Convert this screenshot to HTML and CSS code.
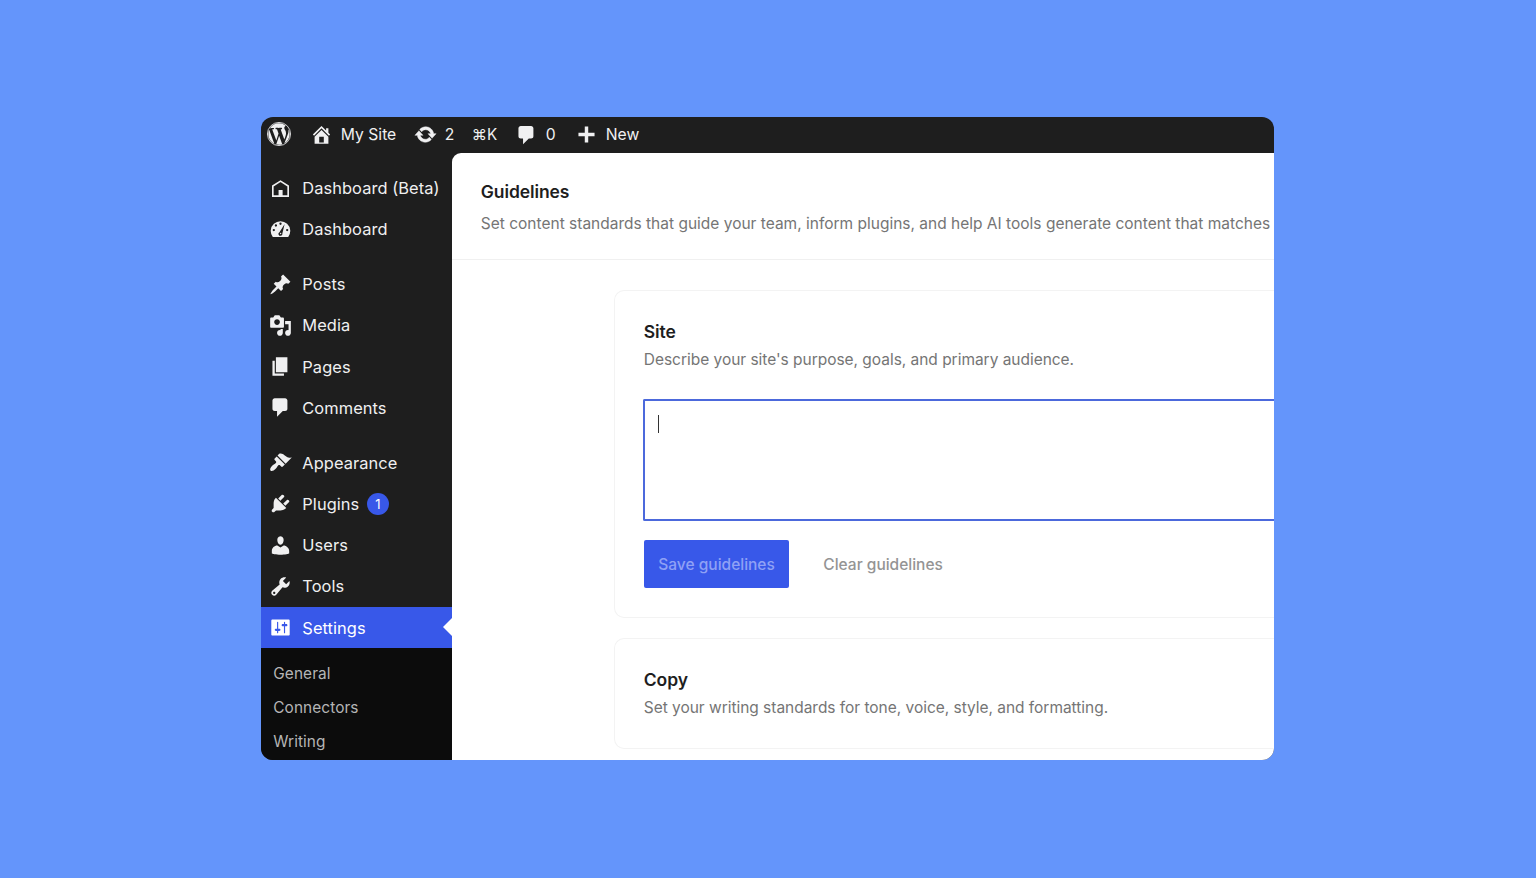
FILE: index.html
```html
<!DOCTYPE html>
<html lang="en">
<head>
    <meta charset="UTF-8">
    <title>Guidelines</title>
    <link rel="stylesheet" href="styles.css">
</head>
<body>
    <div class="window">
        <!-- Admin bar -->
        <header class="topbar">
            <svg class="logo" viewBox="0 0 20 20"><circle cx="10" cy="10" r="9.65" fill="none" stroke="currentColor" stroke-width=".7"/><path d="M7.78 15.37L4.37 6.22c.55-.02 1.17-.08 1.17-.08.5-.06.44-1.13-.06-1.11 0 0-1.45.11-2.37.11-.18 0-.37 0-.58-.01C4.12 2.69 6.87 1.11 10 1.11c2.33 0 4.45.87 6.05 2.34-.68-.11-1.65.39-1.65 1.58 0 .74.45 1.36.9 2.1.35.61.55 1.36.55 2.46 0 1.49-1.4 5-1.4 5l-3.03-8.37c.54-.02.82-.17.82-.17.5-.05.44-1.25-.06-1.22 0 0-1.44.12-2.38.12-.87 0-2.33-.12-2.33-.12-.5-.03-.56 1.2-.06 1.22l.92.08 1.26 3.41zM17.41 10c.24-.64.74-1.87.43-4.25.7 1.29 1.05 2.71 1.05 4.25 0 3.29-1.73 6.24-4.4 7.78.97-2.59 1.94-5.2 2.92-7.78zM6.1 18.09C3.12 16.65 1.11 13.53 1.11 10c0-1.3.23-2.48.72-3.59C3.25 10.3 4.67 14.2 6.1 18.09zm4.03-6.63l2.58 6.98c-.86.29-1.76.45-2.71.45-.79 0-1.57-.11-2.29-.33.81-2.38 1.62-4.74 2.42-7.1z"/></svg>
            <a class="bar-item site"><svg class="icon" viewBox="0 0 20 20"><path d="M16 8.5l1.53 1.53-1.06 1.06L10 4.6l-6.47 6.49-1.06-1.06L10 2.5l4 4v-2h2v4zm-6-2.46l6 5.99V18H4v-5.97zM12 17v-5H8v5h4z"/></svg>My Site</a>
            <a class="bar-item updates"><svg class="icon" viewBox="0 0 20 20"><path stroke="currentColor" stroke-width=".4" d="M10.2 3.28c3.53 0 6.43 2.61 6.92 6h2.08l-3.5 4-3.5-4h2.32c-.45-1.97-2.21-3.45-4.32-3.45-1.45 0-2.73.71-3.54 1.78L4.95 5.66C6.23 4.2 8.11 3.28 10.2 3.28zm-.4 13.44c-3.52 0-6.43-2.61-6.92-6H.8l3.5-4c1.17 1.33 2.33 2.67 3.5 4H5.48c.45 1.97 2.21 3.45 4.32 3.45 1.45 0 2.73-.71 3.54-1.78l1.71 1.95c-1.28 1.46-3.15 2.38-5.25 2.38z"/></svg>2</a>
            <a class="bar-item shortcut">⌘K</a>
            <a class="bar-item replies"><svg class="icon" viewBox="0 0 20 20"><path d="M5 2.500h9c1.100 0 2 .9 2 2v7c0 1.100-.9 2-2 2h-2l-5 5v-5H5c-1.100 0-2-.9-2-2v-7c0-1.100.9-2 2-2z"/></svg>0</a>
            <a class="bar-item new"><svg class="icon" viewBox="0 0 20 20"><path d="M17 8.500v3h-5.500V17h-3v-5.500H3v-3h5.500V3h3v5.500z"/></svg>New</a>
        </header>

        <div class="body">
            <!-- Sidebar menu -->
            <nav class="sidebar">
                <a class="menu-item"><svg class="icon" viewBox="0 0 24 24"><path fill="none" stroke="currentColor" stroke-width="1.7" d="M4 9.4 12 4.3l8 5.1V20H4z"/><path d="M10 13.6h4.2V20H10z"/></svg>Dashboard (Beta)</a>
                <a class="menu-item"><svg class="icon" viewBox="0 0 20 20"><path fill-rule="evenodd" d="M3.300 16.500h13.400A8.500 8.500 0 1 0 3.300 16.500zM10 4a1 1 0 1 1 0 2 1 1 0 0 1 0-2zM6 5.500a1 1 0 1 1 0 2 1 1 0 0 1 0-2zM4.200 9.500a1 1 0 1 1 0 2 1 1 0 0 1 0-2zM15.800 9.500a1 1 0 1 1 0 2 1 1 0 0 1 0-2zM13.600 5.200 11.600 13.400a1.700 1.700 0 1 1-2.500-1.100z"/><circle cx="10.100" cy="13.500" r=".6"/></svg>Dashboard</a>
                <div class="separator"></div>
                <a class="menu-item"><svg class="icon" viewBox="0 0 20 20"><path d="M10.440 3.020l1.820-1.820 6.360 6.350-1.830 1.820c-1.050-.68-2.480-.57-3.410.36l-.75.75c-.92.93-1.040 2.350-.35 3.410l-1.830 1.820-2.410-2.410-2.800 2.790c-.42.42-3.380 2.710-3.800 2.290s1.860-3.390 2.280-3.810l2.790-2.790L4.100 9.360l1.830-1.820c1.050.69 2.480.57 3.400-.36l.75-.75c.93-.92 1.050-2.350.36-3.410z"/></svg>Posts</a>
                <a class="menu-item"><svg class="icon" viewBox="0 0 20 20"><path d="M13 11V4c0-.55-.45-1-1-1h-1.670L9 1H5L3.670 3H2c-.55 0-1 .45-1 1v7c0 .55.45 1 1 1h10c.55 0 1-.45 1-1zM7 4.500c1.380 0 2.500 1.120 2.500 2.500S8.380 9.500 7 9.500 4.500 8.380 4.500 7 5.620 4.500 7 4.500zM14 6h5v10.500c0 1.380-1.120 2.500-2.500 2.500S14 17.880 14 16.500s1.120-2.500 2.500-2.500c.17 0 .34.02.5.05V9h-3V6zm-4 8.050V13h2v3.500c0 1.380-1.120 2.500-2.500 2.500S7 17.880 7 16.500 8.120 14 9.500 14c.17 0 .34.02.5.05z"/></svg>Media</a>
                <a class="menu-item"><svg class="icon" viewBox="0 0 20 20"><path d="M6 15V2h10v13H6zm-1 1h8v2H3V5h2v11z"/></svg>Pages</a>
                <a class="menu-item"><svg class="icon" viewBox="0 0 20 20"><path d="M5 2h9c1.1 0 2 .9 2 2v7c0 1.1-.9 2-2 2h-2l-5 5v-5H5c-1.1 0-2-.9-2-2V4c0-1.1.9-2 2-2z"/></svg>Comments</a>
                <div class="separator"></div>
                <a class="menu-item"><svg class="icon" viewBox="0 0 20 20"><path d="M14.480 11.060L7.410 3.990l1.500-1.500c.5-.56 2.300-.47 3.510.32 1.210.8 1.430 1.280 2.910 2.100 1.180.64 2.450 1.260 4.450.85zm-.71.71L6.700 4.700 4.930 6.470c-.39.39-.39 1.020 0 1.410l1.060 1.060c.39.39.39 1.030 0 1.420-.6.6-1.430 1.110-2.210 1.690-.35.26-.7.53-1.010.84C1.430 14.230.4 16.080 1.400 17.070c.99 1 2.840-.03 4.180-1.360.31-.31.58-.66.85-1.020.57-.78 1.080-1.610 1.690-2.210.39-.39 1.020-.39 1.410 0l1.060 1.060c.39.39 1.020.39 1.410 0z"/></svg>Appearance</a>
                <a class="menu-item"><svg class="icon" viewBox="0 0 20 20"><path d="M13.110 4.360L9.870 7.600 8 5.730l3.240-3.240c.35-.34 1.050-.2 1.560.32.52.51.66 1.210.31 1.550zm-8 1.770l.91-1.120 9.010 9.010-1.190.84c-.71.71-2.630 1.160-3.820 1.160H6.140L4.900 17.260c-.59.59-1.540.59-2.120 0-.59-.58-.59-1.530 0-2.120l1.240-1.240v-3.880c0-1.130.4-3.190 1.090-3.890zm7.260 3.970l3.240-3.240c.34-.35 1.040-.21 1.550.31.52.51.66 1.210.31 1.550l-3.240 3.250z"/></svg>Plugins<span class="badge">1</span></a>
                <a class="menu-item"><svg class="icon" viewBox="0 0 20 20"><path d="M10 9.250c-2.270 0-2.730-3.440-2.730-3.440C7 4.020 7.820 2 9.970 2c2.160 0 2.980 2.020 2.710 3.810 0 0-.41 3.440-2.680 3.440zm0 2.570L12.720 10c2.390 0 4.820 2.330 4.820 4.530v2.490s-3.950 1.130-7.540 1.130c-3.650 0-7.540-1.130-7.540-1.130v-2.490c0-2.250 2.240-4.480 4.770-4.480z"/></svg>Users</a>
                <a class="menu-item"><svg class="icon" viewBox="0 0 20 20"><path d="M16.680 9.770c-1.340 1.340-3.300 1.670-4.950.99l-5.410 6.520c-.99.99-2.590.99-3.580 0s-.99-2.590 0-3.570l6.520-5.420c-.68-1.650-.35-3.610.99-4.950 1.280-1.280 3.120-1.620 4.720-1.060l-2.890 2.890 2.820 2.820 2.860-2.870c.53 1.580.18 3.390-1.080 4.650zM3.810 16.210c.4.39 1.040.39 1.430 0 .4-.4.4-1.040 0-1.430-.39-.4-1.030-.4-1.430 0-.39.39-.39 1.030 0 1.430z"/></svg>Tools</a>
                <a class="menu-item current"><svg class="icon" viewBox="0 0 20 20"><path d="M18 16V4c0-.55-.45-1-1-1H3c-.55 0-1 .45-1 1v12c0 .55.45 1 1 1h14c.55 0 1-.45 1-1zM8 11h1c.55 0 1 .45 1 1s-.45 1-1 1H8v1.500c0 .28-.22.5-.5.5s-.5-.22-.5-.5V13H6c-.55 0-1-.45-1-1s.45-1 1-1h1V5.500c0-.28.22-.5.5-.5s.5.22.5.5V11zm5-2h-1c-.55 0-1-.45-1-1s.45-1 1-1h1V5.500c0-.28.22-.5.5-.5s.5.22.5.5V7h1c.55 0 1 .45 1 1s-.45 1-1 1h-1v5.500c0 .28-.22.5-.5.5s-.5-.22-.5-.5V9z"/></svg>Settings</a>
                <div class="submenu">
                    <a>General</a>
                    <a>Connectors</a>
                    <a>Writing</a>
                </div>
            </nav>

            <!-- Page -->
            <main class="content">
                <div class="page-header">
                    <h1>Guidelines</h1>
                    <p>Set content standards that guide your team, inform plugins, and help AI tools generate content that matches</p>
                </div>
                <div class="cards">
                    <section class="card site-card">
                        <h2>Site</h2>
                        <p>Describe your site's purpose, goals, and primary audience.</p>
                        <div class="field"><span class="caret"></span></div>
                        <div class="actions">
                            <button class="button primary">Save guidelines</button>
                            <button class="button">Clear guidelines</button>
                        </div>
                    </section>
                    <section class="card copy-card">
                        <h2>Copy</h2>
                        <p>Set your writing standards for tone, voice, style, and formatting.</p>
                    </section>
                </div>
            </main>
        </div>
    </div>
</body>
</html>
```
FILE: styles.css
```css
* {
    box-sizing: border-box;
}
body {
    margin: 0;
    height: 100vh;
    padding: 0 1px 1px 0;
    display: flex;
    align-items: center;
    justify-content: center;
    overflow: hidden;
    background: #6495fb;
    font-family: Inter, "Liberation Sans", sans-serif;
    font-size: 16px;
}
h1, h2, p {
    margin: 0;
}
svg {
    fill: currentColor;
    flex: none;
}
.window {
    width: 1013.4px;
    height: 643.4px;
    display: flex;
    flex-direction: column;
    overflow: hidden;
    border-radius: 12px;
    background: #1e1e1e;
    color: #f0f0f1;
}

/* admin bar */
.topbar {
    flex: none;
    height: 36px;
    display: flex;
    align-items: center;
    padding-left: 6px;
    padding-bottom: 1px;
    font-size: 15.7px;
}
.logo {
    width: 24px;
    height: 24px;
}
.icon {
    width: 23px;
    height: 23px;
}
.bar-item {
    display: flex;
    align-items: center;
    white-space: nowrap;
}
.site {
    width: 104px;
    margin-left: 19px;
    gap: 8px;
}
.updates {
    width: 58px;
    gap: 8px;
}
.shortcut {
    width: 43px;
    font-size: 15.2px;
}
.replies {
    width: 60px;
    gap: 8px;
}
.new {
    gap: 8px;
}

/* menu */
.body {
    flex: 1;
    min-height: 0;
    display: flex;
}
.sidebar {
    flex: none;
    width: 191px;
    padding-top: 14.7px;
    display: flex;
    flex-direction: column;
    font-size: 16.4px;
    letter-spacing: .08px;
}
.menu-item {
    flex: none;
    height: 41.3px;
    display: flex;
    align-items: center;
    gap: 10.5px;
    padding-left: 8px;
    white-space: nowrap;
}
.separator {
    flex: none;
    height: 13.3px;
}
.badge {
    width: 22px;
    height: 22px;
    margin: 1px 0 0 -3px;
    display: flex;
    align-items: center;
    justify-content: center;
    border-radius: 50%;
    background: #3858e9;
    color: #fff;
    font-size: 13px;
}
.current {
    position: relative;
    background: #3858e9;
    color: #fff;
}
.current::after {
    content: "";
    position: absolute;
    right: 0;
    top: 11px;
    border: 9.5px solid transparent;
    border-left: 0;
    border-right-color: #fff;
}
.submenu {
    flex: 1;
    padding: 8.4px 0 0 12.5px;
    background: #0c0c0c;
    color: #b5b5b6;
    font-size: 15.4px;
}
.submenu a {
    display: block;
    line-height: 34.2px;
}

/* page */
.content {
    flex: 1;
    min-width: 0;
    overflow: hidden;
    border-top-left-radius: 9px;
    background: #fff;
    color: #1e1e1e;
}
.content p {
    color: #757575;
    font-size: 15.5px;
    line-height: 24px;
    white-space: nowrap;
}
.content h1, .content h2 {
    font-size: 17.5px;
    font-weight: 600;
    line-height: 28px;
    letter-spacing: -.1px;
}
.page-header {
    height: 107px;
    padding: 25px 0 0 29px;
    border-bottom: 1px solid #f0f0f0;
}
.page-header p {
    margin-top: 6px;
}
.cards {
    display: flex;
    flex-direction: column;
    gap: 20px;
    padding: 30px 0 0 162px;
}
.card {
    padding: 27px 0 0 29px;
    border: 1px solid #f3f3f3;
    border-right: 0;
    border-radius: 10px 0 0 10px;
}
.card p {
    margin-top: 2px;
    letter-spacing: -.03px;
}
.site-card {
    height: 328px;
}
.copy-card {
    height: 111px;
}
.field {
    height: 122px;
    margin: 27px 0 0 -1px;
    padding: 14px 13px;
    border: 2px solid #4c69dc;
    border-right: 0;
    border-radius: 2px 0 0 2px;
}
.caret {
    display: block;
    width: 1px;
    height: 18px;
    background: #333;
}
.actions {
    display: flex;
    gap: 19px;
    margin-top: 19px;
}
.button {
    height: 48px;
    padding: 1px 15px 0;
    border: none;
    border-radius: 2px;
    background: none;
    color: #949494;
    font-family: inherit;
    font-size: 15.5px;
    font-weight: 500;
    white-space: nowrap;
}
.primary {
    padding: 1px 14.5px 0;
    background: #3858e9;
    color: #8fa1f5;
}
```
